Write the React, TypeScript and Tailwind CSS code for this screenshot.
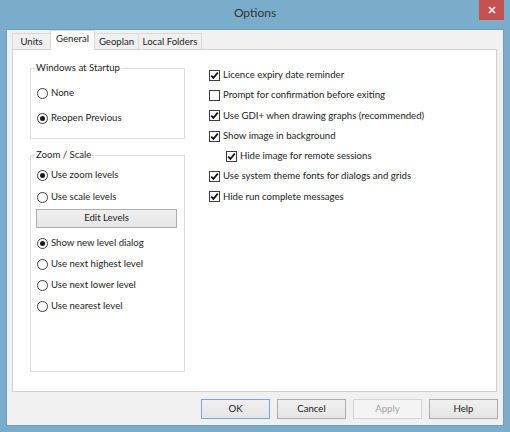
import React from "react";

function Radio({ label, checked = false }: { label: string; checked?: boolean }) {
  return (
    <div className="flex h-full items-center">
      <span className="flex h-[11px] w-[11px] items-center justify-center rounded-full border border-[#3c3c3c] bg-white">
        {checked ? <span className="h-[5px] w-[5px] rounded-full bg-[#1a1a1a]" /> : null}
      </span>
      <span className="ml-[3px]">{label}</span>
    </div>
  );
}

function Check({ label, checked = false }: { label: string; checked?: boolean }) {
  return (
    <div className="flex h-full items-center">
      <span className="flex h-[11px] w-[11px] items-center justify-center border border-[#3c3c3c] bg-white">
        {checked ? (
          <svg width="9" height="9" viewBox="0 0 9 9">
            <path d="M1.2 4.6 L3.4 6.9 L7.8 1.6" fill="none" stroke="#111" strokeWidth="1.7" />
          </svg>
        ) : null}
      </span>
      <span className="ml-[3px]">{label}</span>
    </div>
  );
}

function Button({
  label,
  kind = "normal",
  className = "",
}: {
  label: string;
  kind?: "normal" | "default" | "disabled";
  className?: string;
}) {
  const look =
    kind === "default"
      ? "border-[#6ea9df] bg-gradient-to-b from-[#f0f0f0] to-[#e5e5e5] text-[#1a1a1a]"
      : kind === "disabled"
        ? "border-[#d5d5d5] bg-[#f4f4f4] text-[#a3a3a3]"
        : "border-[#adadad] bg-gradient-to-b from-[#f0f0f0] to-[#e5e5e5] text-[#1a1a1a]";
  return (
    <div className={["flex items-center justify-center border", look, className].join(" ")}>
      {label}
    </div>
  );
}

export default function App() {
  const tabs = [
    { label: "Units", w: "w-[39px]", active: false },
    { label: "General", w: "w-[45px]", active: true },
    { label: "Geoplan", w: "w-[45px]", active: false },
    { label: "Local Folders", w: "w-[64px]", active: false },
  ];

  return (
    <div className="flex h-[432px] w-[510px] flex-col bg-[#7aaccb] font-[Lato,'Noto_Sans',sans-serif] text-[9.6px] text-[#222]">
      {/* title bar */}
      <div className="relative flex h-[29px] justify-center pt-[5px]">
        <span className="text-[12px] leading-[16px] text-[#333]">Options</span>
        <div className="absolute right-[6px] top-0 flex h-[20px] w-[25px] items-center justify-center bg-[#c75050]">
          <svg width="8" height="8" viewBox="0 0 8 8">
            <path d="M1 1 L7 7 M7 1 L1 7" stroke="#fff" strokeWidth="1.6" />
          </svg>
        </div>
      </div>

      {/* client */}
      <div className="mx-[6px] flex h-[397px] flex-col border border-[#6c9ebe] bg-[#f0f0f0]">
        <div className="flex h-[20px] items-end pl-[5px]">
          {tabs.map((t, i) => (
            <div
              key={t.label}
              className={[
                "flex items-center justify-center border-x border-t border-[#d9d9d9]",
                t.w,
                i > 0 ? "-ml-px" : "",
                t.active
                  ? "relative z-10 h-[20px] bg-white pb-[2px]"
                  : "h-[17px] bg-[#f0f0f0]",
              ].join(" ")}
            >
              {t.label}
            </div>
          ))}
        </div>

        {/* tab page */}
        <div className="-mt-px ml-[5px] mr-[6px] flex h-[343px] items-start border border-[#d0d0d0] bg-white">
          <div className="ml-[17px] flex w-[155px] flex-col">
            <fieldset className="mt-[11px] h-[78px] border border-[#dcdcdc] px-[6px]">
              <legend className="-ml-[2px] px-[1px] leading-[14px]">Windows at Startup</legend>
              <div className="mt-[8px] h-[20px]">
                <Radio label="None" />
              </div>
              <div className="mt-[5px] h-[20px]">
                <Radio label="Reopen Previous" checked />
              </div>
            </fieldset>

            <fieldset className="mt-[9px] h-[224px] border border-[#dcdcdc] px-[6px]">
              <legend className="-ml-[2px] px-[1px] leading-[14px]">Zoom / Scale</legend>
              <div className="mt-[3px] h-[20px]">
                <Radio label="Use zoom levels" checked />
              </div>
              <div className="mt-[2px] h-[20px]">
                <Radio label="Use scale levels" />
              </div>
              <Button label="Edit Levels" className="-ml-px mt-[2px] h-[19px] w-[141px]" />
              <div className="mt-[5px] flex flex-col">
                <div className="h-[21px]">
                  <Radio label="Show new level dialog" checked />
                </div>
                <div className="h-[21px]">
                  <Radio label="Use next highest level" />
                </div>
                <div className="h-[21px]">
                  <Radio label="Use next lower level" />
                </div>
                <div className="h-[21px]">
                  <Radio label="Use nearest level" />
                </div>
              </div>
            </fieldset>
          </div>

          <div className="ml-[24px] mt-[15px] flex flex-col">
            <div className="h-[20.3px]">
              <Check label="Licence expiry date reminder" checked />
            </div>
            <div className="h-[20.3px]">
              <Check label="Prompt for confirmation before exiting" />
            </div>
            <div className="h-[20.3px]">
              <Check label="Use GDI+ when drawing graphs (recommended)" checked />
            </div>
            <div className="h-[20.3px]">
              <Check label="Show image in background" checked />
            </div>
            <div className="h-[20.3px] pl-[17px]">
              <Check label="Hide image for remote sessions" checked />
            </div>
            <div className="h-[20.3px]">
              <Check label="Use system theme fonts for dialogs and grids" checked />
            </div>
            <div className="h-[20.3px]">
              <Check label="Hide run complete messages" checked />
            </div>
          </div>
        </div>

        {/* buttons */}
        <div className="mt-[7px] flex justify-end gap-[7px] pr-[5px]">
          <Button label="OK" kind="default" className="h-[20px] w-[69px]" />
          <Button label="Cancel" className="h-[20px] w-[69px]" />
          <Button label="Apply" kind="disabled" className="h-[20px] w-[69px]" />
          <Button label="Help" className="h-[20px] w-[69px]" />
        </div>
      </div>
    </div>
  );
}
